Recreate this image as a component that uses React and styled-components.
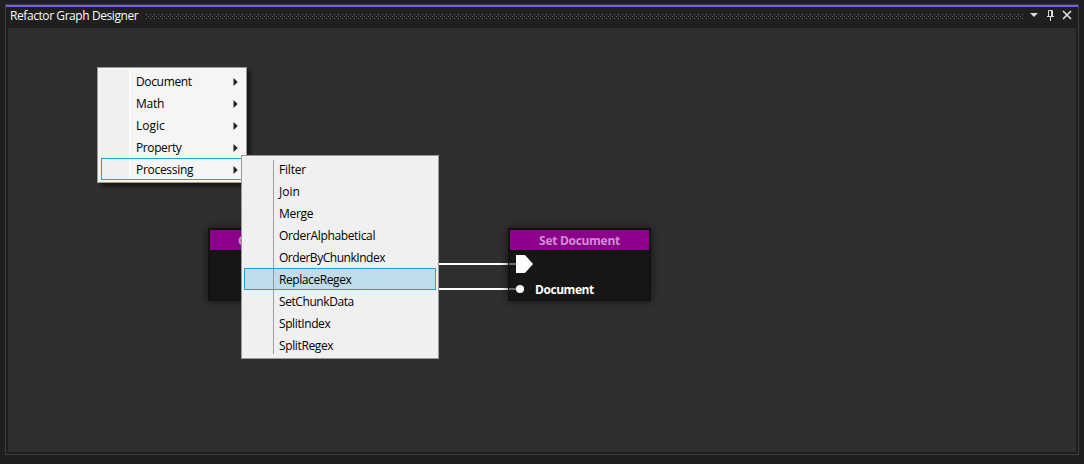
import React from "react";
import styled, { createGlobalStyle } from "styled-components";

const Global = createGlobalStyle`
  * { box-sizing: border-box; }
  body { margin: 0; background: #1f1f1f; font: 12px "Open Sans", "Noto Sans", sans-serif; overflow: hidden; }
`;
const Screen = styled.div`
  height: 464px;
  padding: 4px 5px 9px 5px;
`;
const ToolWindow = styled.section`
  height: 451px;
  border: 1px solid #3d3d3d;
  display: flex;
  flex-direction: column;
  padding: 0 2px 2px;
`;
const Accent = styled.div`
  height: 2px;
  margin: 0 -2px;
  background: #7160e8;
  flex: none;
`;
const TitleBar = styled.header`
  height: 21px;
  flex: none;
  display: flex;
  align-items: center;
  padding: 0 2px 3px;
`;
const Title = styled.h1`
  margin: 0;
  width: 136px;
  font-size: 12px;
  font-weight: 400;
  line-height: 18px;
  letter-spacing: -0.42px;
  color: #fafafa;
  white-space: nowrap;
`;
const Grip = styled.div`
  flex: 1;
  height: 5px;
  background:
    conic-gradient(from 270deg at 1px 1px, #666 25%, transparent 0) 0 0 / 4px 4px,
    conic-gradient(from 270deg at 1px 1px, #666 25%, transparent 0) 2px 2px / 4px 4px;
`;
const WindowIcons = styled.svg`
  width: 50px;
  height: 18px;
  display: block;
  flex: none;
`;
const Canvas = styled.main`
  position: relative;
  flex: 1;
  background: #2f2f2f;
  overflow: hidden;
`;
const Wires = styled.svg`
  position: absolute;
  left: 420px;
  top: 230px;
`;
const Node = styled.article`
  position: absolute;
  left: ${(p) => p.$x}px;
  top: ${(p) => p.$y}px;
  width: 143px;
  height: 73px;
  border: 2px solid #121212;
  background: #161616;
  box-shadow: 0 0 9px rgba(0, 0, 0, 0.6);
`;
const NodeTitle = styled.h2`
  margin: 0;
  height: 20px;
  background: #8c008c;
  color: #d08fd0;
  font-size: 12px;
  font-weight: 700;
  line-height: 21px;
  text-align: center;
  letter-spacing: -0.3px;
`;
const Ports = styled.div`
  display: flex;
  height: 49px;
  padding-left: 6px;
`;
const PortGlyphs = styled.svg`
  width: 17px;
  height: 49px;
  overflow: visible;
`;
const PortLabel = styled.span`
  margin: 31px 0 0 2px;
  color: #fff;
  font-weight: 700;
  line-height: 18px;
  letter-spacing: -0.45px;
`;
const Menu = styled.ul`
  position: absolute;
  left: ${(p) => p.$x}px;
  top: ${(p) => p.$y}px;
  width: ${(p) => p.$w}px;
  margin: 0;
  list-style: none;
  border: 1px solid #999;
`;
const RootMenu = styled(Menu)`
  height: 116px;
  padding: 2px 2px 2px 3px;
  background: linear-gradient(#fff, #fff) 31px 2px / 1px 110px no-repeat,
    linear-gradient(#f0f0f0, #f0f0f0) 2px 2px / 29px 110px no-repeat, #f5f5f5;
  box-shadow: 4px 4px 4px rgba(0, 0, 0, 0.5);
`;
const SubMenu = styled(Menu)`
  height: 204px;
  padding: 2px;
  background: linear-gradient(#a0a0a0, #a0a0a0) 31px 4px / 1px 194px no-repeat, #f0f0f0;
`;
const Item = styled.li`
  display: flex;
  align-items: center;
  justify-content: space-between;
  height: 22px;
  padding: 2px 5px 0 34px;
  border: 1px solid ${(p) => (p.$active ? "#26a0da" : "transparent")};
  background: ${(p) => (p.$fill ? "rgba(38, 160, 218, 0.24)" : "none")};
  color: #000;
  line-height: 20px;
  letter-spacing: ${(p) => p.$ls}px;
`;
const Arrow = styled.svg`
  width: 5px;
  height: 8px;
  margin-top: -1px;
  flex: none;
`;

const rootItems = [
  ["Document", -0.35],
  ["Math", -0.25],
  ["Logic", 0],
  ["Property", -0.4],
  ["Processing", -0.3],
];
const subItems = [
  ["Filter", -0.2],
  ["Join", 0],
  ["Merge", -0.3],
  ["OrderAlphabetical", -0.35],
  ["OrderByChunkIndex", -0.47],
  ["ReplaceRegex", -0.42],
  ["SetChunkData", -0.42],
  ["SplitIndex", -0.4],
  ["SplitRegex", -0.37],
];

export default function App() {
  return (
    <Screen>
      <Global />
      <ToolWindow>
        <Accent />
        <TitleBar>
          <Title>Refactor Graph Designer</Title>
          <Grip />
          <WindowIcons viewBox="0 0 50 18">
            <path d="M6 6h8l-4 4z" fill="#dcdcdc" />
            <path d="M24.5 9.5v-6h4v6M27.5 3.5v6M23 9.5h7M26.5 10v4" fill="none" stroke="#dcdcdc" />
            <path d="M39 4l8 8M47 4l-8 8" stroke="#dcdcdc" strokeWidth="1.7" />
          </WindowIcons>
        </TitleBar>
        <Canvas>
          <Node $x={200} $y={200}>
            <NodeTitle>Get Document</NodeTitle>
          </Node>
          <Wires width="80" height="36">
            <path d="M0 6h80M0 31h80" stroke="#fff" strokeWidth="2" />
          </Wires>
          <Node $x={500} $y={200}>
            <NodeTitle>Set Document</NodeTitle>
            <Ports>
              <PortGlyphs>
                <path d="M-7 14h7M-7 39h7" stroke="#6a6a6a" strokeWidth="2" />
                <path d="M0 5h9l8 9-8 9H0z" fill="#fff" />
                <circle cx="4" cy="39" r="4" fill="#fff" />
              </PortGlyphs>
              <PortLabel>Document</PortLabel>
            </Ports>
          </Node>
          <RootMenu $x={89} $y={39} $w={150}>
            {rootItems.map(([name, ls]) => (
              <Item key={name} $ls={ls} $active={name === "Processing"}>
                {name}
                <Arrow viewBox="0 0 5 8">
                  <path d="M0.5 0l4.2 4-4.2 4z" fill="#212121" />
                </Arrow>
              </Item>
            ))}
          </RootMenu>
          <SubMenu $x={233} $y={127} $w={198}>
            {subItems.map(([name, ls]) => (
              <Item key={name} $ls={ls} $active={name === "ReplaceRegex"} $fill={name === "ReplaceRegex"}>
                {name}
              </Item>
            ))}
          </SubMenu>
        </Canvas>
      </ToolWindow>
    </Screen>
  );
}
